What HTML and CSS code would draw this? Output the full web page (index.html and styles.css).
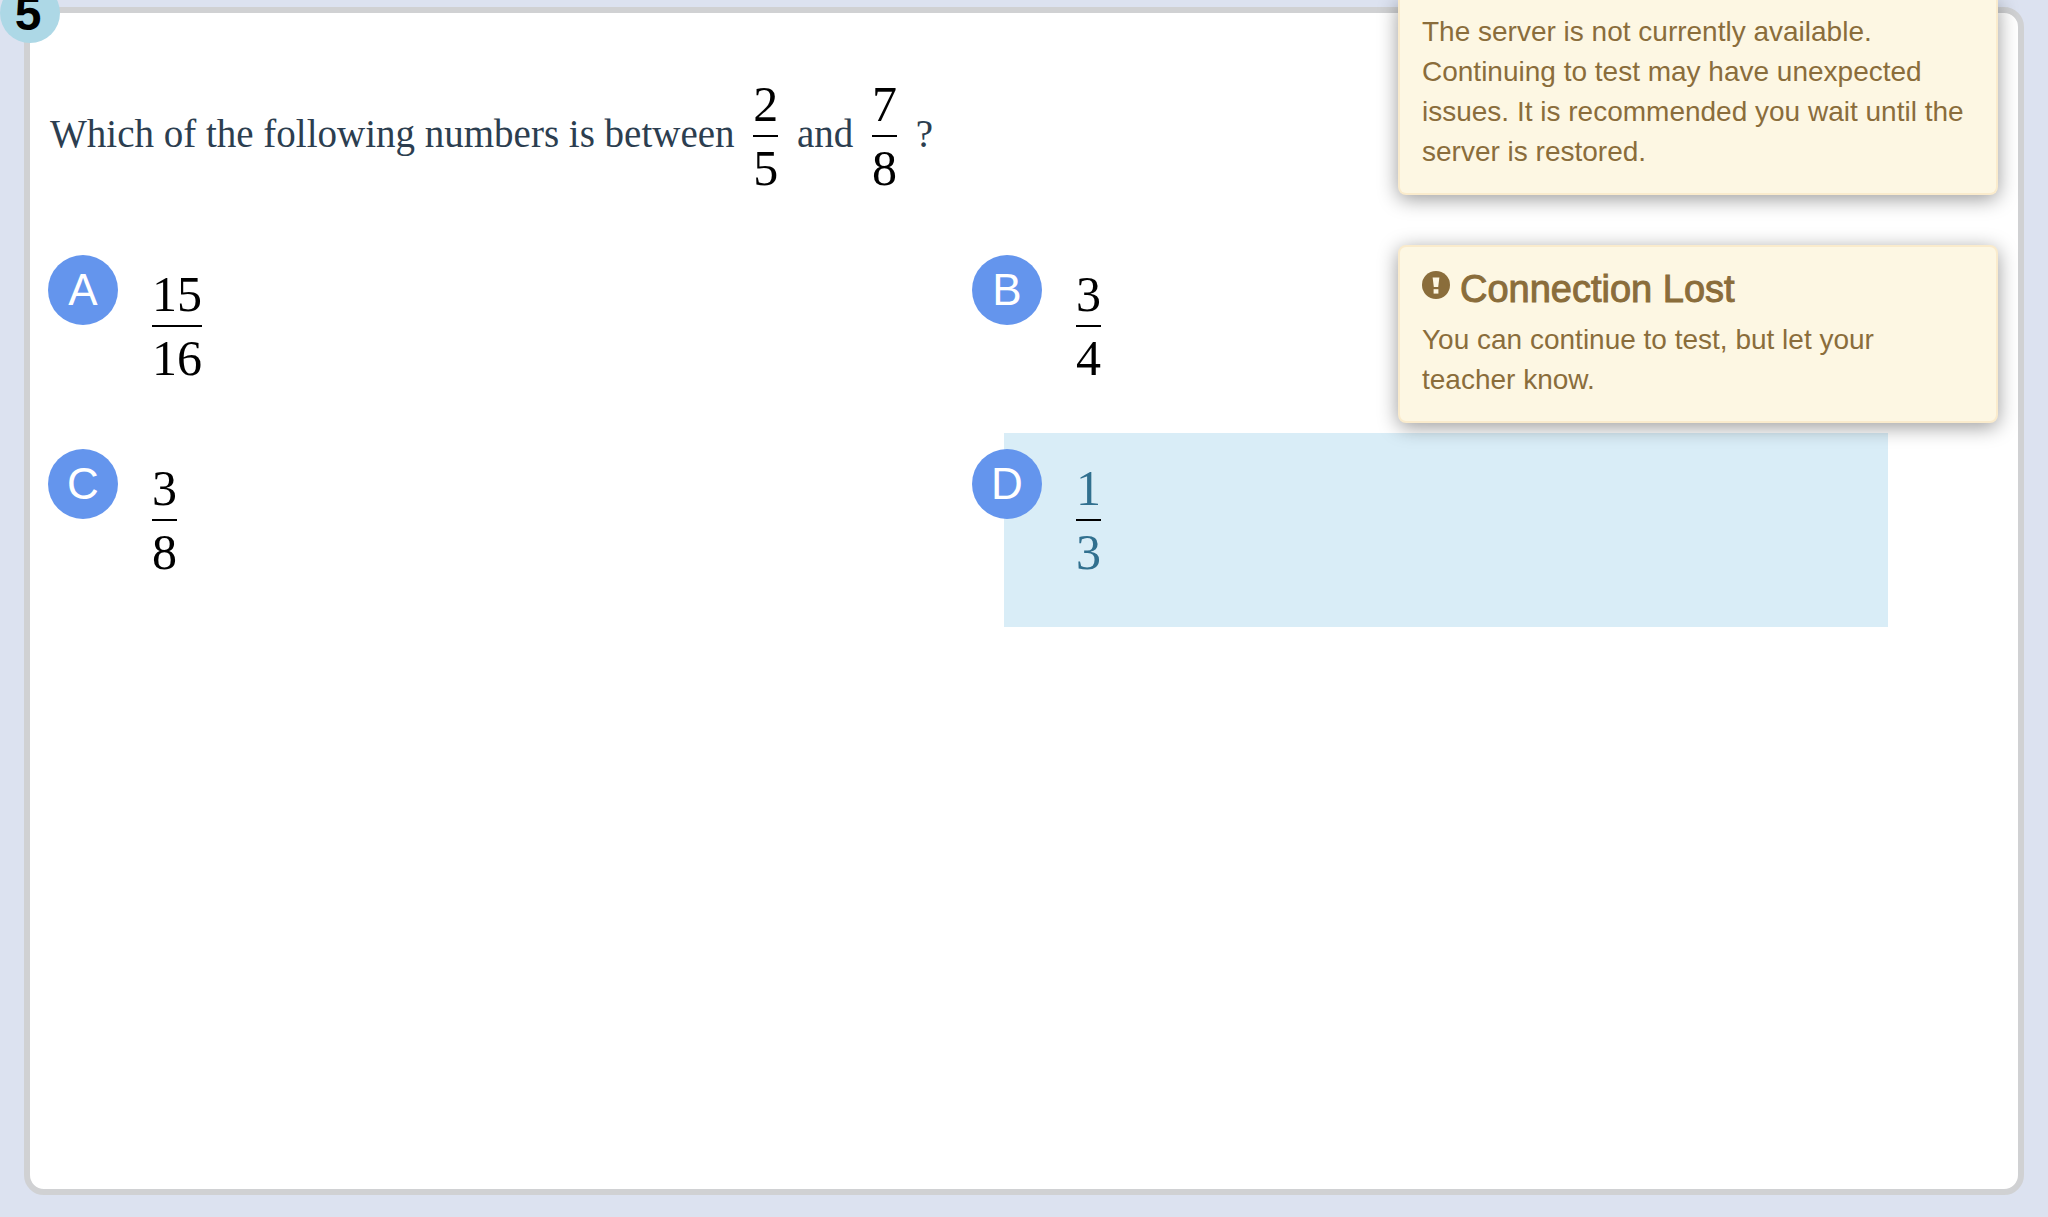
FILE: index.html
```html
<!DOCTYPE html>
<html lang="en">
  <head>
    <meta charset="UTF-8" />
    <meta name="viewport" content="width=device-width, initial-scale=1.0" />
    <title>Question 5</title>
    <link rel="stylesheet" href="styles.css">
  </head>
  <body>
    <main class="panel">
      <div class="number">5</div>
      <p class="question">
        Which of the following numbers is between
        <span class="fraction"><span>2</span><span class="bottom">5</span></span>
        and
        <span class="fraction"><span>7</span><span class="bottom">8</span></span>
        ?
      </p>
      <div class="choices">
        <div class="choice">
          <button type="button" class="letter">A</button>
          <span class="fraction"><span>15</span><span class="bottom">16</span></span>
        </div>
        <div class="choice">
          <button type="button" class="letter">B</button>
          <span class="fraction"><span>3</span><span class="bottom">4</span></span>
        </div>
        <div class="choice">
          <button type="button" class="letter">C</button>
          <span class="fraction"><span>3</span><span class="bottom">8</span></span>
        </div>
        <div class="choice selected">
          <button type="button" class="letter">D</button>
          <span class="fraction"><span>1</span><span class="bottom">3</span></span>
        </div>
      </div>
    </main>

    <div class="alerts">
      <div class="alert alert-top">
        <p>
          The server is not currently available. Continuing to test may have
          unexpected issues. It is recommended you wait until the server is
          restored.
        </p>
      </div>
      <div class="alert">
        <h4>
          <svg class="icon" viewBox="0 0 28 28">
            <circle cx="14" cy="14" r="14" fill="#8a6d3b" />
            <path d="M10.6 6.5h6.8l-1.2 9.5h-4.4z" fill="#fdf7e3" />
            <rect x="11.6" y="18.2" width="4.8" height="4.4" fill="#fdf7e3" />
          </svg>
          Connection Lost
        </h4>
        <p>You can continue to test, but let your teacher know.</p>
      </div>
    </div>
  </body>
</html>
```
FILE: styles.css
```css
* {
  box-sizing: border-box;
}
body {
  margin: 0;
  min-height: 100vh;
  display: flex;
  background: #dce2f0;
  font-family: "Helvetica Neue", "Liberation Sans", Arial, sans-serif;
}
p,
h4 {
  margin: 0;
}

.panel {
  position: relative;
  flex: 1;
  margin: 7px 24px 22px;
  padding: 60px 130px 40px 50px;
  background: #fff;
  border: 6px solid #d0d1d3;
  border-radius: 20px;
}
/* sits over the corner of the panel */
.number {
  position: absolute;
  top: -30px;
  left: -30px;
  width: 60px;
  height: 60px;
  padding-right: 4px;
  border-radius: 50%;
  background: #add8e6;
  color: #000;
  font-size: 48px;
  font-weight: bold;
  line-height: 62px;
  text-align: center;
}

.question {
  margin: 0 0 40px -30px;
  color: #2c3e50;
  font-family: "Liberation Serif", serif;
  font-size: 39px;
}
.question .fraction {
  margin: 0 9px;
}
.fraction {
  display: inline-flex;
  flex-direction: column;
  vertical-align: 26px; /* raise so the bar is level with the text */
  color: #000;
  font-family: "Liberation Serif", "Times New Roman", serif;
  font-size: 50px;
  line-height: 62px;
  text-align: center;
}
.fraction .bottom {
  border-top: 2px solid #000;
}

.choices {
  display: grid;
  grid-template-columns: 1fr 1fr;
  column-gap: 40px;
}
.choice {
  display: flex;
  align-items: flex-start;
  gap: 34px;
  min-height: 194px;
  padding-top: 16px;
}
.choice .fraction {
  margin-top: 8px;
}
.letter {
  width: 70px;
  height: 70px;
  margin-left: -32px;
  padding: 0;
  border: none;
  border-radius: 50%;
  background: #6495ed;
  color: #fff;
  font-family: inherit;
  font-size: 44px;
  line-height: 70px;
  cursor: pointer;
}
.selected {
  background: #d9edf7;
}
.selected .fraction {
  color: #31708f;
}

.alerts {
  position: absolute;
  top: 0;
  right: 50px;
  display: flex;
  flex-direction: column;
  gap: 50px;
  width: 600px;
}
.alert {
  padding: 22px 22px 21px;
  border: 2px solid #faebcc;
  border-radius: 8px;
  background: #fdf7e3;
  box-shadow: 0 4px 20px rgba(0, 0, 0, 0.4);
  color: #8a6d3b;
  font-size: 28px;
  line-height: 40px;
}
.alert-top {
  padding-top: 12px;
  border-top: none;
  border-radius: 0 0 8px 8px;
}
.alert h4 {
  display: flex;
  align-items: flex-start;
  gap: 10px;
  margin-bottom: 11px;
  font-size: 38px;
  font-weight: normal;
  line-height: 40px;
  -webkit-text-stroke: 1px #8a6d3b;
}
.icon {
  width: 28px;
  height: 28px;
  margin-top: 2px;
}
```
